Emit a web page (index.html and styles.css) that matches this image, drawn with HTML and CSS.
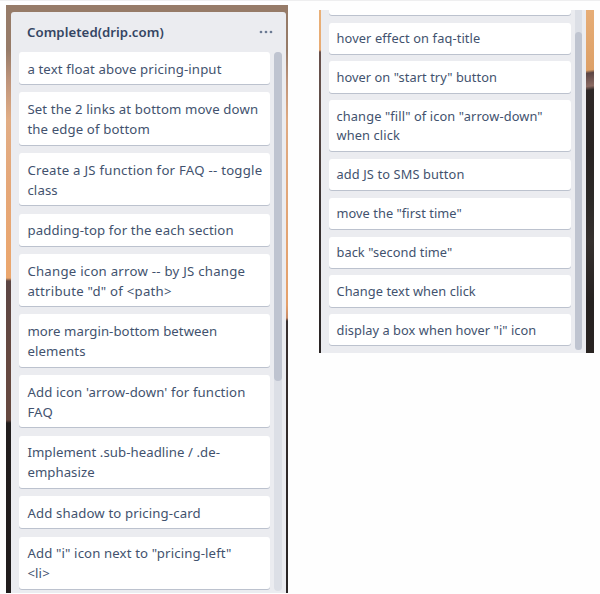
FILE: index.html
```html
<!DOCTYPE html>
<html lang="en">
<head>
<meta charset="utf-8">
<title>Completed</title>
<link rel="stylesheet" href="styles.css">
</head>
<body>
<main class="page">
  <section class="board board-left">
    <div class="list">
      <header class="list-header">
        <h2 class="list-title">Completed(drip.com)</h2>
        <svg class="menu" viewBox="0 0 14 4"><circle cx="2" cy="2" r="1.35"/><circle cx="7" cy="2" r="1.35"/><circle cx="12" cy="2" r="1.35"/></svg>
      </header>
      <div class="list-body">
        <div class="cards">
          <article class="card">a text float above pricing-input</article>
          <article class="card">Set the 2 links at bottom move down<br>the edge of bottom</article>
          <article class="card"><span class="loose">Create a JS function for FAQ -- toggle</span><br>class</article>
          <article class="card">padding-top for the each section</article>
          <article class="card"><span class="loose">Change icon arrow -- by JS change</span><br><span class="loose">attribute "d" of &lt;path&gt;</span></article>
          <article class="card"><span class="tight">more margin-bottom between</span><br>elements</article>
          <article class="card">Add icon 'arrow-down' for function<br>FAQ</article>
          <article class="card"><span class="tight">Implement .sub-headline / .de-</span><br><span class="tight">emphasize</span></article>
          <article class="card">Add shadow to pricing-card</article>
          <article class="card">Add "i" icon next to "pricing-left"<br>&lt;li&gt;</article>
        </div>
        <div class="track"><div class="thumb"></div></div>
      </div>
    </div>
  </section>
  <section class="board board-right">
    <div class="list">
      <div class="list-body">
        <div class="cards">
          <article class="card card-cut"></article>
          <article class="card">hover effect on faq-title</article>
          <article class="card"><span class="tight">hover on "start try" button</span></article>
          <article class="card">change "fill" of icon "arrow-down"<br>when click</article>
          <article class="card">add JS to SMS button</article>
          <article class="card"><span class="tight">move the "first time"</span></article>
          <article class="card"><span class="tight">back "second time"</span></article>
          <article class="card"><span class="tight">Change text when click</span></article>
          <article class="card"><span class="tight">display a box when hover "i" icon</span></article>
        </div>
        <div class="track"><div class="thumb"></div></div>
      </div>
    </div>
  </section>
</main>
</body>
</html>
```
FILE: styles.css
```css
* { box-sizing: border-box; }
body { margin: 0; background: #fefefe; color: #42526e; font-family: "Noto Sans", "Open Sans", sans-serif; }
.page { display: flex; align-items: flex-start; width: 600px; height: 594px; overflow: hidden; border-top: 1px solid #eeeeef; }
.board { flex: none; overflow: hidden; }
.list { background: #ebecf0; height: 100%; }
.list-body { display: flex; }
.cards { display: flex; flex-direction: column; letter-spacing: 0.13px; }
.card { background: #fff; border-radius: 3px; box-shadow: 0 1px 0 #bcc2ce; white-space: nowrap; }
.loose { letter-spacing: 0.25px; }
.tight { letter-spacing: 0.06px; }
.track { background: #dcdfe6; }
.thumb { background: #bfc4d0; border-radius: 4px; }

.board-left {
  width: 282px; height: 588px; margin: 4px 0 0 6px; padding: 7px 2px 0 5px;
  background:
    linear-gradient(#967b68 0, #967b68 45px, #bd937a 75px, #e1ad85 115px, #e5a778 180px, #eba66c 273px, #5b4543 276px, #654840 350px, #65483f 415px, #211d1d 418px, #201c1c) left / 6px 100% no-repeat,
    linear-gradient(#967b68 0, #967b68 45px, #bd937a 75px, #dfaa82 115px, #e5a06a 300px, #c78b68 313px, #39302f 316px, #292525) right / 3px 100% no-repeat,
    #967b68;
}
.board-left .list { border-radius: 3px 3px 0 0; padding-left: 8px; }
.list-header { display: flex; align-items: center; justify-content: space-between; height: 40px; padding: 0 13px 0 8px; }
.list-title { margin: 0; font-size: 13.2px; font-weight: 600; line-height: 20px; letter-spacing: 0.05px; color: #344563; }
.menu { width: 14px; height: 4px; fill: #6b7a93; }
.board-left .cards { width: 251px; gap: 8.2px; font-size: 13.2px; line-height: 20.2px; }
.board-left .card { padding: 6.6px 8px 5.4px 8.4px; }
.board-left .track { width: 8px; height: 539px; margin-left: 4px; border-radius: 4px; }
.board-left .thumb { height: 329px; }

.board-right {
  width: 275px; height: 343px; margin: 9px 0 0 31px; padding: 0 8px 0 2px;
  background:
    linear-gradient(#e9b078 0, #e8aa72 40px, #69504b 42px, #63504b 80px, #373030 200px, #292424) left / 3px 100% no-repeat,
    linear-gradient(172deg, #e7ad76 0, #dda067 60px, #5b4544 63px, #8b6a62 76px, #2e2827 80px, #282322 140px, #2c2927 190px, #35302e 230px, #252120 290px, #292321) right / 9px 100% no-repeat;
}
.board-right .list { padding-left: 7.7px; }
.board-right .cards { width: 242px; gap: 7.8px; font-size: 12.8px; line-height: 19.5px; }
.board-right .card { padding: 6.5px 7.8px 5.1px; }
.board-right .card-cut { height: 4.8px; padding: 0; border-radius: 0 0 3px 3px; }
.board-right .track { width: 7.8px; height: 340px; margin-left: 4px; padding-top: 22px; border-radius: 0 0 4px 4px; }
.board-right .thumb { height: 318px; }
```
